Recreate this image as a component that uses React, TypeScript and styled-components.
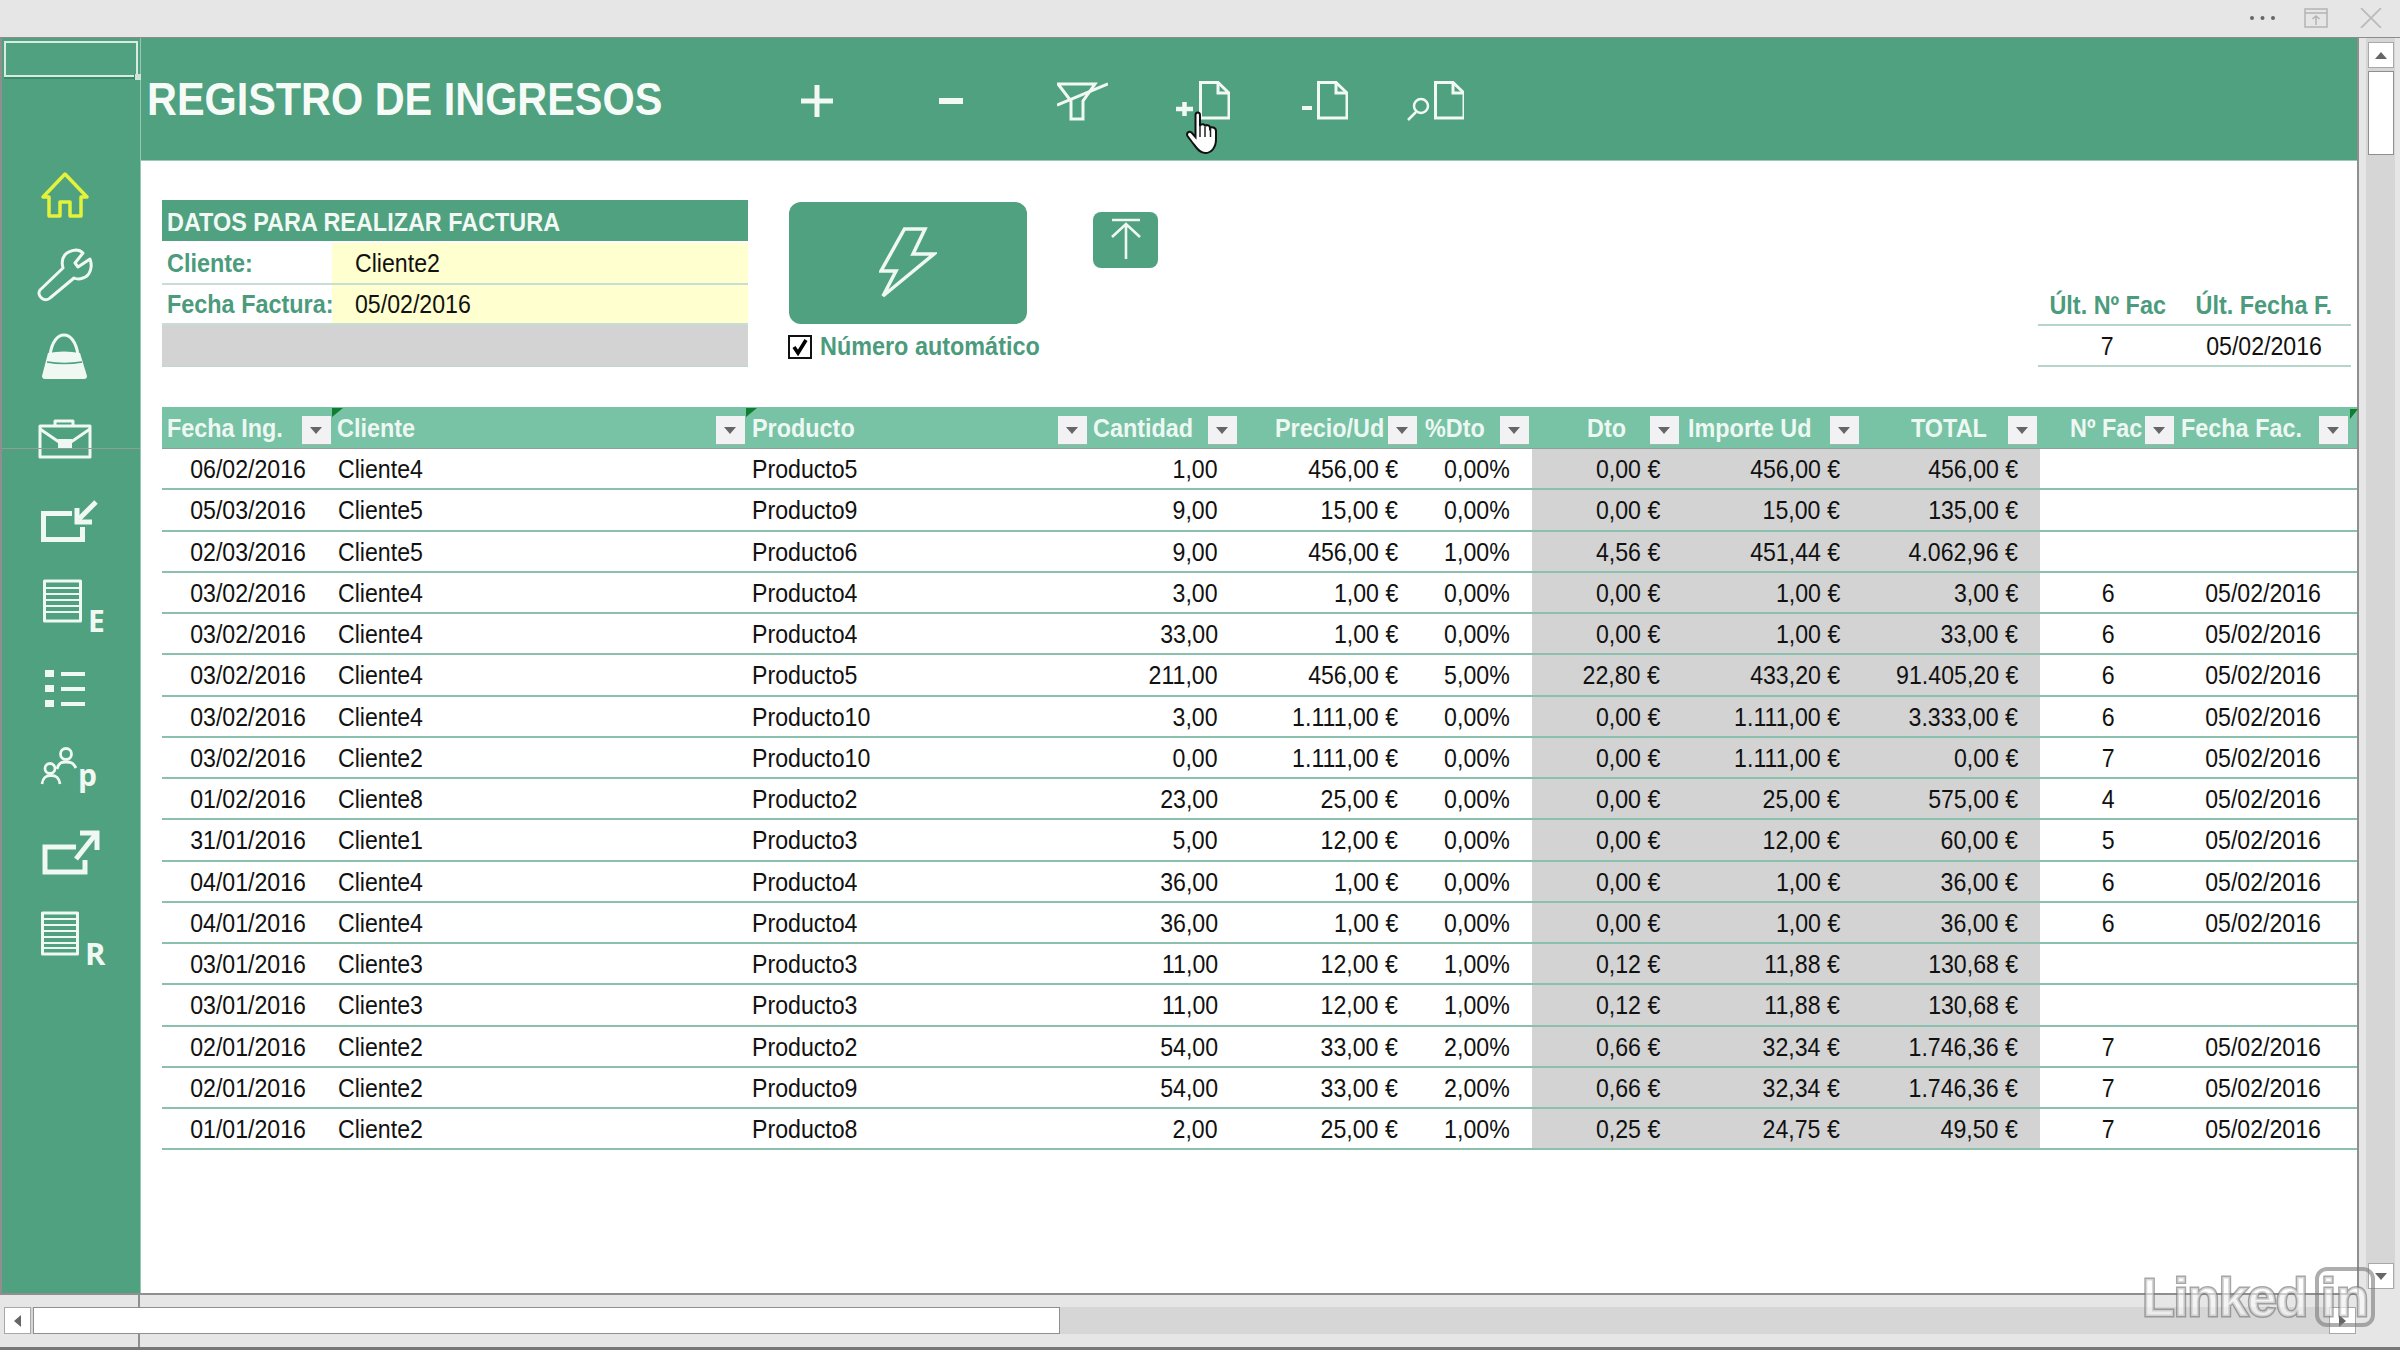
import React from "react";
import styled, { createGlobalStyle } from "styled-components";

const GREEN = "#4fa17f";
const LIGHT = "#78c2a5";
const LINE = "#8bbfae";
const LABEL = "#4b9b7c";
const PANEL = "#e6e6e6";
const TRACK = "#d6d6d6";
const COLUMNS = "172px 414px 342px 150px 180px 112px 150px 180px 178px 137px 180px";

const Global = createGlobalStyle`
  html, body { margin: 0; padding: 0; background: ${PANEL}; }
  body { font-family: "Liberation Sans", Arial, sans-serif; color: #111; overflow: hidden; }
`;

const Page = styled.div`
  position: relative;
  width: 2400px;
  height: 1350px;
  display: flex;
  flex-direction: column;
  overflow: hidden;
  filter: blur(0.45px);
`;

const TopBar = styled.div`
  flex: 0 0 37px;
  box-sizing: content-box;
  border-bottom: 1px solid #8c8c8c;
  display: flex;
  align-items: center;
  justify-content: flex-end;
  padding-right: 18px;
  gap: 28px;
  svg { display: block; margin-top: -1px; }
  svg:last-child { margin-left: 4px; }
`;

const Middle = styled.div`
  flex: 0 0 1257px;
  display: flex;
`;

const Workspace = styled.div`
  width: 2359px;
  box-sizing: border-box;
  display: flex;
  border: 2px solid #8f8f8f;
  border-width: 0 2px 2px 2px;
  background: #fff;
`;

const Sidebar = styled.nav`
  position: relative;
  flex: 0 0 138px;
  box-sizing: border-box;
  background: ${GREEN};
  padding-top: 116px;
  display: grid;
  grid-auto-rows: 82.5px;
  align-content: start;
  svg { display: block; }
`;

const SelectedCell = styled.div`
  position: absolute;
  left: 2px;
  top: 3px;
  width: 134px;
  height: 36px;
  box-sizing: border-box;
  border: 2px solid #d8ebe2;
  box-shadow: 0 2px 0 #3c8a6a;
  &::after {
    content: "";
    position: absolute;
    right: -5px;
    bottom: -5px;
    width: 6px;
    height: 6px;
    background: #cfe3da;
    border-left: 1px solid #3c8a6a;
  }
`;

const FreezeLine = styled.div`
  position: absolute;
  left: 0;
  right: 0;
  top: 410px;
  height: 1px;
  background: #8f9f98;
`;

const Main = styled.main`
  flex: 1;
  min-width: 0;
  display: flex;
  flex-direction: column;
  border-left: 1px solid #9cc4b4;
`;

const Header = styled.header`
  flex: 0 0 122px;
  background: ${GREEN};
  display: flex;
  align-items: center;
  padding-left: 6px;
  border-bottom: 1px solid #9ccab7;
  svg { display: block; flex: none; }
`;

const Tx = styled.span<{ $o?: string; $s?: number }>`
  display: inline-block;
  white-space: nowrap;
  transform: scaleX(${(p) => p.$s ?? 0.89});
  transform-origin: ${(p) => p.$o ?? "left"} center;
`;

const Title = styled.h1`
  flex: 0 0 654px;
  margin: 0;
  font-size: 46px;
  line-height: 50px;
  font-weight: 700;
  color: #f6fbf8;
`;

const Tool = styled.svg<{ $gap?: number }>`
  margin-left: ${(p) => p.$gap ?? 0}px;
  height: 44px;
  fill: none;
  stroke: #f2f9f5;
`;

const Content = styled.div`
  flex: 1;
  padding: 39px 0 0 21px;
`;

const TopRow = styled.section`
  display: flex;
  height: 167px;
`;

const Form = styled.div`
  flex: 0 0 586px;
  display: flex;
  flex-direction: column;
`;

const FormTitle = styled.div`
  height: 41px;
  margin-bottom: 2px;
  background: ${GREEN};
  color: #f2f9f5;
  font-size: 26px;
  font-weight: 700;
  line-height: 44px;
  padding-left: 5px;
`;

const FormRow = styled.div<{ $h: number }>`
  height: ${(p) => p.$h}px;
  line-height: ${(p) => p.$h}px;
  display: grid;
  grid-template-columns: 170px 1fr;
  border-bottom: 2px solid #c7ded4;
`;

const FormLabel = styled.div`
  color: ${LABEL};
  font-size: 26px;
  font-weight: 700;
  padding-left: 5px;
`;

const FormValue = styled.div`
  background: #ffffcf;
  font-size: 26px;
  padding-left: 23px;
`;

const FormFoot = styled.div`
  flex: 1;
  background: #d3d3d3;
  border-bottom: 1px solid #c2d6cd;
`;

const Actions = styled.div`
  flex: 0 0 238px;
  min-width: 0;
  margin-left: 41px;
  padding-top: 2px;
  box-sizing: border-box;
`;

const BigButton = styled.button`
  width: 238px;
  height: 122px;
  border: 0;
  padding: 0;
  border-radius: 12px;
  background: ${GREEN};
  display: flex;
  align-items: center;
  justify-content: center;
`;

const AutoRow = styled.label`
  display: flex;
  align-items: center;
  gap: 8px;
  margin-top: 7px;
  margin-left: -1px;
  color: ${LABEL};
  font-size: 26px;
  font-weight: 700;
`;

const CheckBox = styled.span`
  flex: 0 0 24px;
  height: 24px;
  box-sizing: border-box;
  border: 2px solid #111;
  background: #fff;
  display: flex;
  align-items: center;
  justify-content: center;
`;

const SmallButton = styled.button`
  flex: 0 0 65px;
  height: 56px;
  margin: 12px 0 0 66px;
  padding: 0;
  border: 0;
  border-radius: 8px;
  background: ${GREEN};
  svg { display: block; }
`;

const LastInvoice = styled.div`
  margin-left: auto;
  margin-right: 6px;
  width: 313px;
  align-self: flex-end;
  display: grid;
  grid-template-columns: 139px 174px;
  grid-auto-rows: 41px;
`;

const LastHead = styled.div`
  color: ${LABEL};
  font-size: 26px;
  font-weight: 700;
  line-height: 40px;
  text-align: center;
  border-bottom: 2px solid #b6d5c9;
`;

const LastValue = styled.div`
  font-size: 26px;
  line-height: 40px;
  text-align: center;
  border-bottom: 2px solid #b6d5c9;
`;

const Table = styled.div`
  margin-top: 40px;
  width: 2195px;
`;

const HeadRow = styled.div`
  display: grid;
  grid-template-columns: ${COLUMNS};
  height: 41px;
  background: ${LIGHT};
  border-bottom: 1px solid #8f9f99;
`;

const HeadCell = styled.div<{ $pad: number; $flag?: boolean }>`
  position: relative;
  display: flex;
  align-items: center;
  padding-left: ${(p) => p.$pad}px;
  padding-top: 2px;
  padding-right: 3px;
  min-width: 0;
  color: #eef8f3;
  font-size: 26px;
  font-weight: 700;
  &::before {
    content: ${(p) => (p.$flag ? '""' : "none")};
    position: absolute;
    left: -2px;
    top: 1px;
    width: 11px;
    height: 9px;
    background: #0d7f2e;
    clip-path: polygon(0 0, 100% 0, 0 100%);
  }
`;

const LastFlag = styled.span`
  position: absolute;
  right: -1px;
  top: 2px;
  width: 8px;
  height: 10px;
  background: #0d7f2e;
  clip-path: polygon(0 0, 100% 0, 0 100%);
`;

const Drop = styled.span<{ $right: number }>`
  position: absolute;
  right: ${(p) => p.$right}px;
  top: 9px;
  width: 29px;
  height: 28px;
  background: #f2f2f5;
  box-shadow: 0 1px 0 #a7b5af;
  &::after {
    content: "";
    position: absolute;
    left: 8px;
    top: 11px;
    border-style: solid;
    border-width: 7px 6.5px 0 6.5px;
    border-color: #666 transparent transparent transparent;
  }
`;

const Body = styled.div`
  border-left: 2px solid ${LINE};
`;

const Row = styled.div`
  display: grid;
  grid-template-columns: ${COLUMNS};
  grid-auto-rows: 41.25px;
  margin-left: -2px;
`;

const Cell = styled.div<{ $align?: string; $shade?: boolean; $pad?: string }>`
  box-sizing: border-box;
  border-bottom: 2px solid ${LINE};
  display: flex;
  align-items: center;
  justify-content: ${(p) => p.$align ?? "flex-start"};
  padding: ${(p) => p.$pad ?? "2px 0 0"};
  background: ${(p) => (p.$shade ? "#d3d3d3" : "#fff")};
  font-size: 26px;
  white-space: nowrap;
  min-width: 0;
`;

const RightRail = styled.aside`
  flex: 1;
  display: flex;
  padding: 0 5px 6px 7px;
`;

const VTrack = styled.div`
  flex: 1;
  background: ${TRACK};
  display: flex;
  flex-direction: column;
  align-items: center;
  padding-top: 4px;
`;

const ScrollButton = styled.div`
  flex: 0 0 auto;
  width: 26px;
  height: 26px;
  box-sizing: border-box;
  background: #fff;
  border: 1px solid #a8a8a8;
  display: flex;
  align-items: center;
  justify-content: center;
`;

const VThumb = styled.div`
  width: 26px;
  height: 84px;
  margin-top: 3px;
  box-sizing: border-box;
  background: #fff;
  border: 1px solid #8f8f8f;
`;

const VSpacer = styled.div`
  flex: 1;
`;

const Bottom = styled.footer`
  position: relative;
  flex: 0 0 55px;
  box-sizing: border-box;
  border-bottom: 3px solid #777;
  padding: 12px 44px 0 4px;
  &::before {
    content: "";
    position: absolute;
    left: 138px;
    top: 0;
    bottom: 0;
    width: 2px;
    background: #8f8f8f;
  }
`;

const HTrack = styled.div`
  position: relative;
  height: 27px;
  background: ${TRACK};
  display: flex;
  justify-content: space-between;
`;

const HLeft = styled.div`
  display: flex;
  gap: 2px;
`;

const HThumb = styled.div`
  width: 1027px;
  height: 27px;
  box-sizing: border-box;
  background: #fff;
  border: 1px solid #8f8f8f;
`;

const HButton = styled(ScrollButton)`
  width: 27px;
  height: 27px;
`;

const Arrow = styled.span<{ $dir: "up" | "down" | "left" | "right" }>`
  width: 0;
  height: 0;
  border-style: solid;
  border-width: ${(p) =>
    p.$dir === "up"
      ? "0 6px 7px 6px"
      : p.$dir === "down"
      ? "7px 6px 0 6px"
      : p.$dir === "left"
      ? "6px 7px 6px 0"
      : "6px 0 6px 7px"};
  border-color: ${(p) =>
    p.$dir === "up"
      ? "transparent transparent #666 transparent"
      : p.$dir === "down"
      ? "#666 transparent transparent transparent"
      : p.$dir === "left"
      ? "transparent #666 transparent transparent"
      : "transparent transparent transparent #666"};
`;

const Cursor = styled.svg`
  position: absolute;
  left: 1186px;
  top: 111px;
  width: 33px;
  height: 44px;
`;

const Watermark = styled.div`
  position: absolute;
  right: 25px;
  bottom: 23px;
  display: flex;
  align-items: center;
  gap: 8px;
  font-weight: 700;
  color: rgba(255, 255, 255, 0.55);
  -webkit-text-stroke: 3px rgba(120, 120, 120, 0.65);
  paint-order: stroke fill;
  font-size: 54px;
  line-height: 60px;
`;

const LinkedWord = styled.span`
  letter-spacing: -1px;
  transform: scaleX(0.98);
  transform-origin: right center;
`;

const LinkedBox = styled.span`
  width: 60px;
  height: 60px;
  box-sizing: border-box;
  border: 4px solid rgba(120, 120, 120, 0.6);
  border-radius: 12px;
  text-align: center;
  line-height: 52px;
`;

const Stroke = styled.svg`
  fill: none;
  stroke: #eff8f3;
  stroke-linejoin: round;
`;

const SideLetter = styled.text`
  font-family: "Open Sans", sans-serif;
  font-weight: 700;
  fill: #eff8f3;
  stroke: none;
`;

const icons = [
  <path key="home" d="M65 20 L43 43 L49 43 V62 H60 V48 H70 V62 H81 V43 L87 43 Z" stroke="#e4f23c" strokeWidth="3.5" />,
  <path
    key="wrench"
    d="M40 53 L63 31 C60 20 66 14 76 13 Q80 13 83 16 L75 26 L78 30 L90 22 C93 30 90 39 83 41 Q78 43 74 41 L50 61 C45 66 36 59 40 53 Z"
    strokeWidth="3"
  />,
  <g key="bag">
    <path d="M50 36 C52 22 58 16 64 16 C70 16 76 22 78 36" strokeWidth="3" />
    <path d="M48 34 Q64 31 80 34 L87 57 Q87 60 84 60 H45 Q42 60 42 57 Z" fill="#eff8f3" stroke="none" />
    <path d="M47 43 Q64 46 82 43" stroke="#4fa17f" strokeWidth="1.5" />
  </g>,
  <g key="case" strokeWidth="3">
    <path d="M40 24 H90 V55 H40 Z" />
    <path d="M55 23 V19 H73 V23" />
    <path d="M40 27 L59 40 M90 27 L71 40" />
    <rect x="58" y="37" width="14" height="9" fill="#eff8f3" stroke="none" />
  </g>,
  <g key="in" strokeWidth="5" strokeLinejoin="miter">
    <path d="M72 29.5 H43.5 V55.5 H82.5 V43" />
    <path d="M96 18 L79 35" />
    <path d="M77 24 V38 H92" />
  </g>,
  <g key="e" strokeWidth="3">
    <rect x="44.5" y="14" width="36" height="40" />
    <path d="M45 21 H80 M45 27 H80 M45 33 H80 M45 39 H80 M45 45 H80" strokeWidth="2" />
    <SideLetter x="88" y="65" fontSize="30">E</SideLetter>
  </g>,
  <g key="list">
    <rect x="45" y="21" width="9" height="7" fill="#eff8f3" stroke="none" />
    <rect x="45" y="36" width="9" height="7" fill="#eff8f3" stroke="none" />
    <rect x="45" y="51" width="9" height="7" fill="#eff8f3" stroke="none" />
    <path d="M61 25 H85 M61 40 H85 M61 55 H85" strokeWidth="4" />
  </g>,
  <g key="people" strokeWidth="2.8">
    <circle cx="66" cy="22" r="5.5" />
    <path d="M57 37 C59 30 62 30 66 30 C70 30 73 30 76 36" />
    <circle cx="50" cy="36.5" r="5" />
    <path d="M42 52 C43 45 46 43.5 51 43.5 C56 43.5 59 45 60 52" />
    <SideLetter x="78" y="54" fontSize="30" fontWeight="600">p</SideLetter>
  </g>,
  <g key="out" strokeWidth="5" strokeLinejoin="miter">
    <path d="M76 33 H45 V58 H85 V46" />
    <path d="M76 45 L95 21" />
    <path d="M80 19 H97 V36" />
  </g>,
  <g key="r" strokeWidth="3">
    <rect x="42.5" y="16" width="35" height="41" />
    <path d="M43 22 H77 M43 28 H77 M43 34 H77 M43 40 H77 M43 46 H77 M43 51 H77" strokeWidth="1.8" />
    <SideLetter x="85" y="68" fontSize="31">R</SideLetter>
  </g>,
];

const Doc = ({ x }: { x: number }) => (
  <g strokeWidth="3">
    <path d={`M${x + 1.5} 5.5 H${x + 19} L${x + 30} 16 V41 H${x + 1.5} Z`} />
    <path d={`M${x + 19} 5 V16 H${x + 30}`} />
  </g>
);

const heads: [string, number, boolean?][] = [
  ["Fecha Ing.", 5],
  ["Cliente", 3, true],
  ["Producto", 4, true],
  ["Cantidad", 3],
  ["Precio/Ud", 35],
  ["%Dto", 5],
  ["Dto", 55],
  ["Importe Ud", 6],
  ["TOTAL", 49],
  ["Nº Fac", 30],
  ["Fecha Fac.", 4],
];

const rows: string[][] = [
  ["06/02/2016", "Cliente4", "Producto5", "1,00", "456,00 €", "0,00%", "0,00 €", "456,00 €", "456,00 €", "", ""],
  ["05/03/2016", "Cliente5", "Producto9", "9,00", "15,00 €", "0,00%", "0,00 €", "15,00 €", "135,00 €", "", ""],
  ["02/03/2016", "Cliente5", "Producto6", "9,00", "456,00 €", "1,00%", "4,56 €", "451,44 €", "4.062,96 €", "", ""],
  ["03/02/2016", "Cliente4", "Producto4", "3,00", "1,00 €", "0,00%", "0,00 €", "1,00 €", "3,00 €", "6", "05/02/2016"],
  ["03/02/2016", "Cliente4", "Producto4", "33,00", "1,00 €", "0,00%", "0,00 €", "1,00 €", "33,00 €", "6", "05/02/2016"],
  ["03/02/2016", "Cliente4", "Producto5", "211,00", "456,00 €", "5,00%", "22,80 €", "433,20 €", "91.405,20 €", "6", "05/02/2016"],
  ["03/02/2016", "Cliente4", "Producto10", "3,00", "1.111,00 €", "0,00%", "0,00 €", "1.111,00 €", "3.333,00 €", "6", "05/02/2016"],
  ["03/02/2016", "Cliente2", "Producto10", "0,00", "1.111,00 €", "0,00%", "0,00 €", "1.111,00 €", "0,00 €", "7", "05/02/2016"],
  ["01/02/2016", "Cliente8", "Producto2", "23,00", "25,00 €", "0,00%", "0,00 €", "25,00 €", "575,00 €", "4", "05/02/2016"],
  ["31/01/2016", "Cliente1", "Producto3", "5,00", "12,00 €", "0,00%", "0,00 €", "12,00 €", "60,00 €", "5", "05/02/2016"],
  ["04/01/2016", "Cliente4", "Producto4", "36,00", "1,00 €", "0,00%", "0,00 €", "1,00 €", "36,00 €", "6", "05/02/2016"],
  ["04/01/2016", "Cliente4", "Producto4", "36,00", "1,00 €", "0,00%", "0,00 €", "1,00 €", "36,00 €", "6", "05/02/2016"],
  ["03/01/2016", "Cliente3", "Producto3", "11,00", "12,00 €", "1,00%", "0,12 €", "11,88 €", "130,68 €", "", ""],
  ["03/01/2016", "Cliente3", "Producto3", "11,00", "12,00 €", "1,00%", "0,12 €", "11,88 €", "130,68 €", "", ""],
  ["02/01/2016", "Cliente2", "Producto2", "54,00", "33,00 €", "2,00%", "0,66 €", "32,34 €", "1.746,36 €", "7", "05/02/2016"],
  ["02/01/2016", "Cliente2", "Producto9", "54,00", "33,00 €", "2,00%", "0,66 €", "32,34 €", "1.746,36 €", "7", "05/02/2016"],
  ["01/01/2016", "Cliente2", "Producto8", "2,00", "25,00 €", "1,00%", "0,25 €", "24,75 €", "49,50 €", "7", "05/02/2016"],
];

const cellStyle = (i: number) => {
  if (i === 0) return { $align: "center" };
  if (i === 1) return { $pad: "2px 0 0 4px" };
  if (i === 2) return { $pad: "2px 0 0 4px" };
  if (i === 9) return { $align: "center" };
  if (i === 10) return { $align: "center", $pad: "2px 8px 0 0" };
  return { $align: "flex-end", $pad: "2px 22px 0 0", $shade: i >= 6 && i <= 8 };
};

const originFor = (i: number) => (i === 1 || i === 2 ? "left" : i === 0 || i >= 9 ? "center" : "right");

export default function App() {
  return (
    <Page>
      <Global />
      <TopBar>
        <svg width="27" height="6" viewBox="0 0 27 6">
          <circle cx="3" cy="3" r="2" fill="#666" />
          <circle cx="13.5" cy="3" r="2" fill="#666" />
          <circle cx="24" cy="3" r="2" fill="#666" />
        </svg>
        <svg width="24" height="20" viewBox="0 0 24 20" fill="none" stroke="#b4b4b4" strokeWidth="1.5">
          <rect x="1" y="1" width="22" height="18" />
          <path d="M1 5 H23 M12 17 V8 M8.5 11 L12 8 L15.5 11" />
        </svg>
        <svg width="22" height="20" viewBox="0 0 22 20" fill="none" stroke="#bcbcbc" strokeWidth="1.8">
          <path d="M1 0 L21 20 M21 0 L1 20" />
        </svg>
      </TopBar>

      <Middle>
        <Workspace>
          <Sidebar>
            <SelectedCell />
            <FreezeLine />
            {icons.map((icon, i) => (
              <Stroke key={i} width="138" height="82" viewBox="2 0 138 82">
                {icon}
              </Stroke>
            ))}
          </Sidebar>
          <Main>
            <Header>
              <Title>
                <Tx $s={0.9}>REGISTRO DE INGRESOS</Tx>
              </Title>
              <Tool width="32" viewBox="0 0 32 44" strokeWidth="5">
                <path d="M16 8 V40 M0 24 H32" />
              </Tool>
              <Tool $gap={106} width="24" viewBox="0 0 24 44" strokeWidth="6">
                <path d="M0 24 H24" />
              </Tool>
              <Tool $gap={94} width="51" viewBox="0 0 51 44" strokeWidth="3">
                <path d="M1 7 H38 L26 24 V42 H14 V24 Z" />
                <path d="M51 7 L0 28" />
              </Tool>
              <Tool $gap={67} width="55" viewBox="0 0 55 44">
                <path d="M1 32 H18 M9.5 25 V39" strokeWidth="4.5" />
                <Doc x={24} />
              </Tool>
              <Tool $gap={72} width="46" viewBox="0 0 46 44">
                <path d="M0 31 H10" strokeWidth="4" />
                <Doc x={15} />
              </Tool>
              <Tool $gap={59} width="57" viewBox="0 0 57 44">
                <circle cx="14" cy="29" r="7" strokeWidth="2.5" />
                <path d="M9 35 L1 43" strokeWidth="2.5" />
                <Doc x={27} />
              </Tool>
            </Header>

            <Content>
              <TopRow>
                <Form>
                  <FormTitle>
                    <Tx $s={0.9}>DATOS PARA REALIZAR FACTURA</Tx>
                  </FormTitle>
                  <FormRow $h={40}>
                    <FormLabel>
                      <Tx $s={0.9}>Cliente:</Tx>
                    </FormLabel>
                    <FormValue>
                      <Tx>Cliente2</Tx>
                    </FormValue>
                  </FormRow>
                  <FormRow $h={38}>
                    <FormLabel>
                      <Tx $s={0.9}>Fecha Factura:</Tx>
                    </FormLabel>
                    <FormValue>
                      <Tx>05/02/2016</Tx>
                    </FormValue>
                  </FormRow>
                  <FormFoot />
                </Form>

                <Actions>
                  <BigButton>
                    <svg width="58" height="72" viewBox="0 0 58 72" fill="none" stroke="#eff8f3" strokeWidth="3.5">
                      <path d="M25.5 2 H46 L34 27 H55 L4 69 L17 44 H2 Z" />
                    </svg>
                  </BigButton>
                  <AutoRow>
                    <CheckBox>
                      <svg width="18" height="18" viewBox="0 0 18 18" fill="none" stroke="#000" strokeWidth="3.6">
                        <path d="M3 9 L7 15 L15 2" />
                      </svg>
                    </CheckBox>
                    <Tx $s={0.9}>Número automático</Tx>
                  </AutoRow>
                </Actions>

                <SmallButton>
                  <svg width="65" height="56" viewBox="0 0 65 56" fill="none" stroke="#eff8f3" strokeWidth="2.6">
                    <path d="M19 8 H47 M33 12 V47 M19 25 L33 12 L47 25" />
                  </svg>
                </SmallButton>

                <LastInvoice>
                  <LastHead>
                    <Tx $s={0.9} $o="center">Últ. Nº Fac</Tx>
                  </LastHead>
                  <LastHead>
                    <Tx $s={0.9} $o="center">Últ. Fecha F.</Tx>
                  </LastHead>
                  <LastValue>
                    <Tx $o="center">7</Tx>
                  </LastValue>
                  <LastValue>
                    <Tx $o="center">05/02/2016</Tx>
                  </LastValue>
                </LastInvoice>
              </TopRow>

              <Table>
                <HeadRow>
                  {heads.map(([label, pad, flag], i) => (
                    <HeadCell key={label} $pad={pad} $flag={flag}>
                      <Tx $s={0.9}>{label}</Tx>
                      <Drop $right={i === heads.length - 1 ? 9 : 3} />
                      {i === heads.length - 1 && <LastFlag />}
                    </HeadCell>
                  ))}
                </HeadRow>
                <Body>
                  {rows.map((row, r) => (
                    <Row key={r}>
                      {row.map((value, i) => (
                        <Cell key={i} {...cellStyle(i)}>
                          {value && <Tx $o={originFor(i)}>{value}</Tx>}
                        </Cell>
                      ))}
                    </Row>
                  ))}
                </Body>
              </Table>
            </Content>
          </Main>
        </Workspace>

        <RightRail>
          <VTrack>
            <ScrollButton>
              <Arrow $dir="up" />
            </ScrollButton>
            <VThumb />
            <VSpacer />
            <ScrollButton>
              <Arrow $dir="down" />
            </ScrollButton>
          </VTrack>
        </RightRail>
      </Middle>

      <Bottom>
        <HTrack>
          <HLeft>
            <HButton>
              <Arrow $dir="left" />
            </HButton>
            <HThumb />
          </HLeft>
          <HButton>
            <Arrow $dir="right" />
          </HButton>
        </HTrack>
      </Bottom>

      <Cursor viewBox="0 0 33 44">
        <path
          d="M9.5 4 C9.5 0.5 14 0.5 14 4 V15 C14.5 12.5 19 12.5 19 15.5 C19.5 13.5 24 13.5 24 17 C25 15.5 30 16 30 20 V28 C30 36 26 42 19 42 C13 42 10 36 6 31 L1.5 25 C0 22 3 19.5 5.5 21.5 L9.5 26 Z"
          fill="#fff"
          stroke="#111"
          strokeWidth="2"
        />
        <path d="M14 15 V26 M19 16 V26 M24.5 17 V26" stroke="#222" strokeWidth="1.5" fill="none" />
      </Cursor>

      <Watermark>
        <LinkedWord>Linked</LinkedWord>
        <LinkedBox>in</LinkedBox>
      </Watermark>
    </Page>
  );
}
